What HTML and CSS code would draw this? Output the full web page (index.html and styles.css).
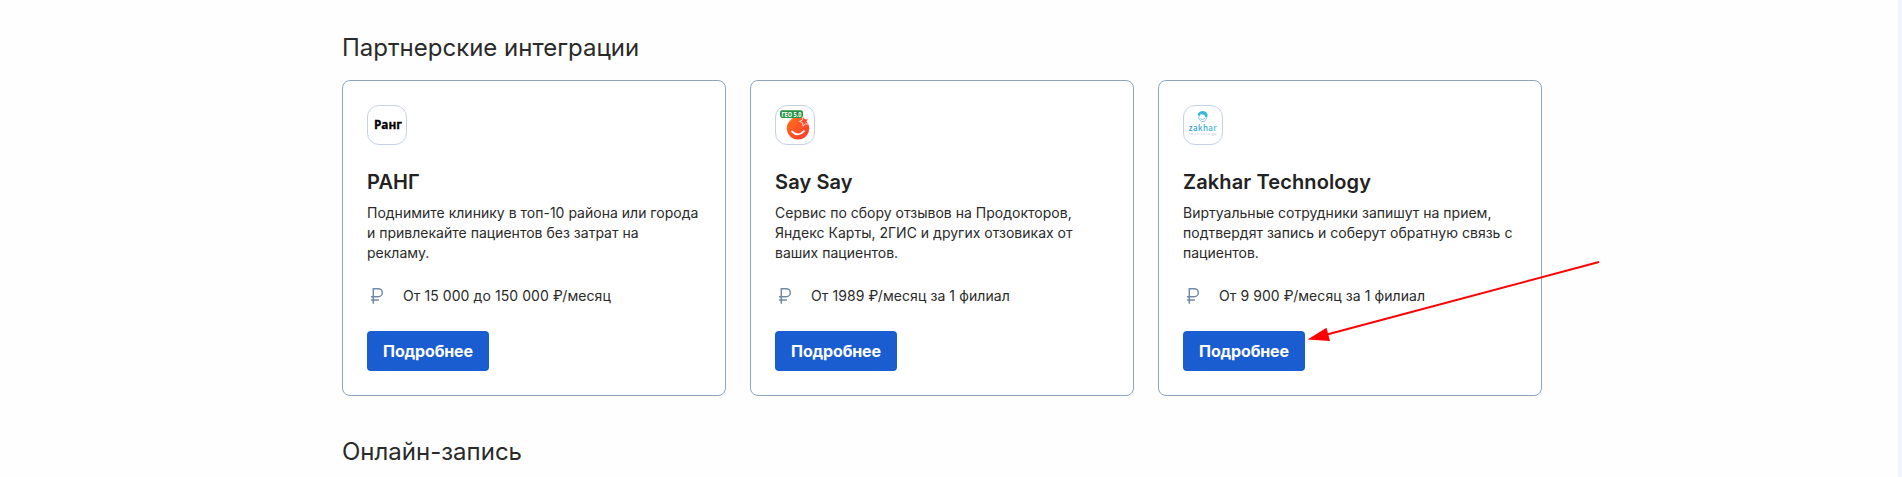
FILE: index.html
```html
<!DOCTYPE html>
<html lang="ru">
<head>
<meta charset="utf-8">
<title>Партнерские интеграции</title>
<link rel="stylesheet" href="styles.css">
</head>
<body>
<main class="page">
  <h2 class="heading">Партнерские интеграции</h2>
  <section class="cards">
    <article class="card">
      <svg class="logo" viewBox="0 0 38 38"><text class="rang" x="5.9" y="22.6" textLength="28" lengthAdjust="spacingAndGlyphs">Ранг</text></svg>
      <h3 class="title">РАНГ</h3>
      <p class="text">Поднимите клинику в топ-10 района или города и привлекайте пациентов без затрат на рекламу.</p>
      <div class="price"><svg class="ruble" viewBox="0 0 24 24"><path d="M6.3 19.8V4.7h5a4 4 0 0 1 0 8H3.9M3.9 15.9h8"/></svg><span>От 15 000 до 150 000 ₽/месяц</span></div>
      <a class="button">Подробнее</a>
    </article>
    <article class="card">
      <svg class="logo" viewBox="0 0 38 38">
        <defs><linearGradient id="orange" x1="0" y1="0" x2="1" y2="1"><stop offset="0" stop-color="#ff751c"/><stop offset="1" stop-color="#ff352c"/></linearGradient></defs>
        <circle cx="22" cy="22.3" r="11.2" fill="url(#orange)"/>
        <path d="M27 10.5l2.2 2.5 3.2-.5-1.4 3 1.8 2.7-3.3-.4-2.4 2.3-.6-3.3-3-1.4 3-1.5z" fill="#ff4b32" stroke="#fff" stroke-width=".8"/>
        <path d="M16 25.5q6 6 12-.3" fill="none" stroke="#fff" stroke-width="1.8" stroke-linecap="round"/>
        <rect x="4" y="4.2" width="23" height="7.8" rx="2.4" fill="#279344"/>
        <text class="geo" x="5.5" y="10.8" textLength="20" lengthAdjust="spacingAndGlyphs">ГЕО 5.0</text>
      </svg>
      <h3 class="title">Say Say</h3>
      <p class="text">Сервис по сбору отзывов на Продокторов, Яндекс Карты, 2ГИС и других отзовиках от ваших пациентов.</p>
      <div class="price"><svg class="ruble" viewBox="0 0 24 24"><path d="M6.3 19.8V4.7h5a4 4 0 0 1 0 8H3.9M3.9 15.9h8"/></svg><span>От 1989 ₽/месяц за 1 филиал</span></div>
      <a class="button">Подробнее</a>
    </article>
    <article class="card">
      <svg class="logo" viewBox="0 0 38 38">
        <defs><linearGradient id="aqua"><stop offset="0" stop-color="#2f97d4"/><stop offset="1" stop-color="#3fc2cd"/></linearGradient></defs>
        <path d="M13.5 8.5q1.5-3.8 5.7-3.6 4.4.4 4.5 5.3l-1.8 1.6-1.6-2.7-3.4-1.2-1.5 2.5z" fill="#3cb7d7"/>
        <path d="M14.6 10.5q0 3.8 3 5.2l3.2-.4 2.4-4M16.4 12.8l2.4.8 2.4-1.6" fill="none" stroke="#78bfe0" stroke-width=".9"/>
        <text class="zakhar" x="4.8" y="24.9" textLength="28" fill="url(#aqua)">zakhar</text>
        <text class="technology" x="5" y="28.5" textLength="27.5">technology</text>
      </svg>
      <h3 class="title">Zakhar Technology</h3>
      <p class="text">Виртуальные сотрудники запишут на прием, подтвердят запись и соберут обратную связь с пациентов.</p>
      <div class="price"><svg class="ruble" viewBox="0 0 24 24"><path d="M6.3 19.8V4.7h5a4 4 0 0 1 0 8H3.9M3.9 15.9h8"/></svg><span>От 9 900 ₽/месяц за 1 филиал</span></div>
      <a class="button">Подробнее</a>
    </article>
  </section>
  <h2 class="heading next">Онлайн-запись</h2>
</main>
<aside class="rail"></aside>
<svg class="arrow" viewBox="0 0 300 90"><path d="M292 7L20 79.5" stroke="#f00" stroke-width="1.9"/><path d="M.5 84.5l19-11.8L23 86z" fill="#f00"/></svg>
</body>
</html>
```
FILE: styles.css
```css
* { box-sizing: border-box; }
body {
  margin: 0;
  height: 477px;
  overflow: hidden;
  display: flex;
  background: #fefefe;
  color: #2a2a2a;
  font-family: Inter, sans-serif;
}
.page { flex: 1; padding: 32px 0 0 342px; }
.rail { width: 4px; background: #f1f5fb; }
.heading { margin: 0; font-size: 24px; line-height: 32px; font-weight: 400; }
.next { margin-top: 40px; }
.cards { display: grid; grid-template-columns: repeat(3, 384px); gap: 24px; margin-top: 16px; }
.card {
  height: 316px;
  padding: 24px;
  display: flex;
  flex-direction: column;
  align-items: flex-start;
  border: 1px solid #8ea4bf;
  border-radius: 8px;
  background: #fff;
}
.logo { width: 40px; height: 40px; border: 1px solid #c6d2e3; border-radius: 12px; flex: none; }
.rang { font: 700 12.5px "Open Sans", sans-serif; fill: #000; stroke: #000; stroke-width: .3px; }
.geo { font: 700 7px "Open Sans", sans-serif; fill: #fff; }
.zakhar { font: 600 8px "Open Sans", sans-serif; }
.technology { font: 400 3.5px Inter, sans-serif; fill: #b8c5cf; }
.title { margin: 23px 0 0; font-size: 20px; line-height: 28px; font-weight: 600; letter-spacing: .12px; color: #222; }
.text { margin: 7px 0 0; font-size: 14px; line-height: 20px; letter-spacing: .01px; }
.price { display: flex; align-items: center; gap: 12px; margin-top: 21px; height: 24px; font-size: 14px; line-height: 18px; letter-spacing: .08px; }
.ruble { width: 24px; height: 24px; fill: none; stroke: #708aa5; stroke-width: 1.5; }
.button {
  margin-top: 23px;
  width: 122px;
  height: 40px;
  display: flex;
  align-items: center;
  justify-content: center;
  border-radius: 4px;
  background: #1a5dd0;
  color: #fff;
  font-size: 16px;
  font-weight: 700;
  letter-spacing: -.15px;
}
.arrow { position: absolute; left: 1307px; top: 255px; width: 300px; height: 90px; fill: none; }
```
